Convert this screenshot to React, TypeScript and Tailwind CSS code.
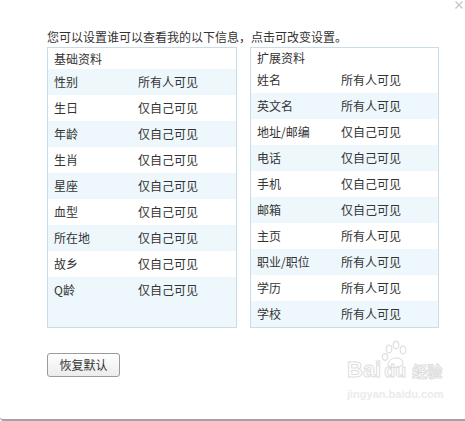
import React from "react";

type Row = { label: string; value: string };

const basic: Row[] = [
  { label: "性别", value: "所有人可见" },
  { label: "生日", value: "仅自己可见" },
  { label: "年龄", value: "仅自己可见" },
  { label: "生肖", value: "仅自己可见" },
  { label: "星座", value: "仅自己可见" },
  { label: "血型", value: "仅自己可见" },
  { label: "所在地", value: "仅自己可见" },
  { label: "故乡", value: "仅自己可见" },
  { label: "Q龄", value: "仅自己可见" },
];

const extended: Row[] = [
  { label: "姓名", value: "所有人可见" },
  { label: "英文名", value: "所有人可见" },
  { label: "地址/邮编", value: "仅自己可见" },
  { label: "电话", value: "仅自己可见" },
  { label: "手机", value: "仅自己可见" },
  { label: "邮箱", value: "仅自己可见" },
  { label: "主页", value: "所有人可见" },
  { label: "职业/职位", value: "所有人可见" },
  { label: "学历", value: "所有人可见" },
  { label: "学校", value: "所有人可见" },
];

const font = { fontFamily: '"Noto Sans CJK SC", "Noto Sans", sans-serif' };
const latin = { fontFamily: '"Liberation Sans", sans-serif' };

function Panel({ title, rows, stripeFirst, width }: { title: string; rows: Row[]; stripeFirst: boolean; width: string }) {
  return (
    <div className={`${width} h-[281px] border border-[#c9dde9] bg-[#eef8fc] flex flex-col`}>
      <div className="h-[21px] bg-white pl-[6px] flex items-center">{title}</div>
      {rows.map((row, i) => {
        const striped = stripeFirst ? i % 2 === 0 : i % 2 === 1;
        return (
          <div
            key={row.label}
            className={`h-[26px] shrink-0 flex items-center pl-[6px] ${striped ? "bg-[#eef8fc]" : "bg-white"}`}
          >
            <span className="w-[84px]">{row.label}</span>
            <span>{row.value}</span>
          </div>
        );
      })}
    </div>
  );
}

export default function App() {
  return (
    <div
      className="relative w-[465px] h-[421px] bg-white border-b-2 border-[#a3a3a3] rounded-bl-[4px] text-[12px] text-[#333] overflow-hidden"
      style={font}
    >
      {/* close */}
      <svg className="absolute left-[455px] top-[1px]" width="8" height="8" viewBox="0 0 8 8" aria-label="关闭">
        <path d="M0.5 0.5 L7.5 7.5 M7.5 0.5 L0.5 7.5" stroke="#c6c6c6" strokeWidth="1.3" />
      </svg>

      <div className="pl-[47px] pt-[29px]">
        <p className="h-[18px] leading-[16px]">您可以设置谁可以查看我的以下信息，点击可改变设置。</p>
        <div className="flex gap-[13px]">
          <Panel title="基础资料" rows={basic} stripeFirst width="w-[190px]" />
          <Panel title="扩展资料" rows={extended} stripeFirst={false} width="w-[189px]" />
        </div>
        <button
          type="button"
          className="mt-[25px] w-[73px] h-[24px] rounded-[3px] border border-[#9a9a9a] bg-gradient-to-b from-white to-[#ececec] text-[12px] text-[#333]"
        >
          恢复默认
        </button>
      </div>

      {/* watermark */}
      <div className="absolute left-[347px] top-[340px] flex flex-col select-none whitespace-nowrap">
        <div className="flex items-end">
          <span
            className="text-[22px] leading-[20px] font-bold"
            style={{ ...latin, color: "transparent", WebkitTextStroke: "1px #dedede" }}
          >
            Bai
          </span>
          <div className="flex flex-col items-center w-[28px]">
            <svg width="28" height="28" viewBox="0 0 28 28">
              <g fill="none" stroke="#e0e0e0" strokeWidth="1.2">
                <ellipse cx="8" cy="9" rx="2.8" ry="3.8" />
                <ellipse cx="15" cy="5" rx="2.8" ry="3.8" />
                <ellipse cx="22" cy="10" rx="2.8" ry="3.8" />
                <ellipse cx="4" cy="17" rx="2.6" ry="3.3" />
                <path d="M7 25 C7 17 21 15 22 23 C23 28 8 29 7 25 Z" />
              </g>
            </svg>
            <span
              className="-mt-[6px] text-[18px] leading-[18px] font-bold"
              style={{ ...latin, color: "transparent", WebkitTextStroke: "1px #dedede" }}
            >
              du
            </span>
          </div>
          <span
            className="ml-[3px] text-[15px] leading-[18px] font-bold"
            style={{ ...font, color: "transparent", WebkitTextStroke: "1px #dedede" }}
          >
            经验
          </span>
        </div>
        <span className="mt-[8px] text-[11px] leading-[12px] font-bold text-[#ebebeb]" style={latin}>
          jingyan.baidu.com
        </span>
      </div>
    </div>
  );
}
